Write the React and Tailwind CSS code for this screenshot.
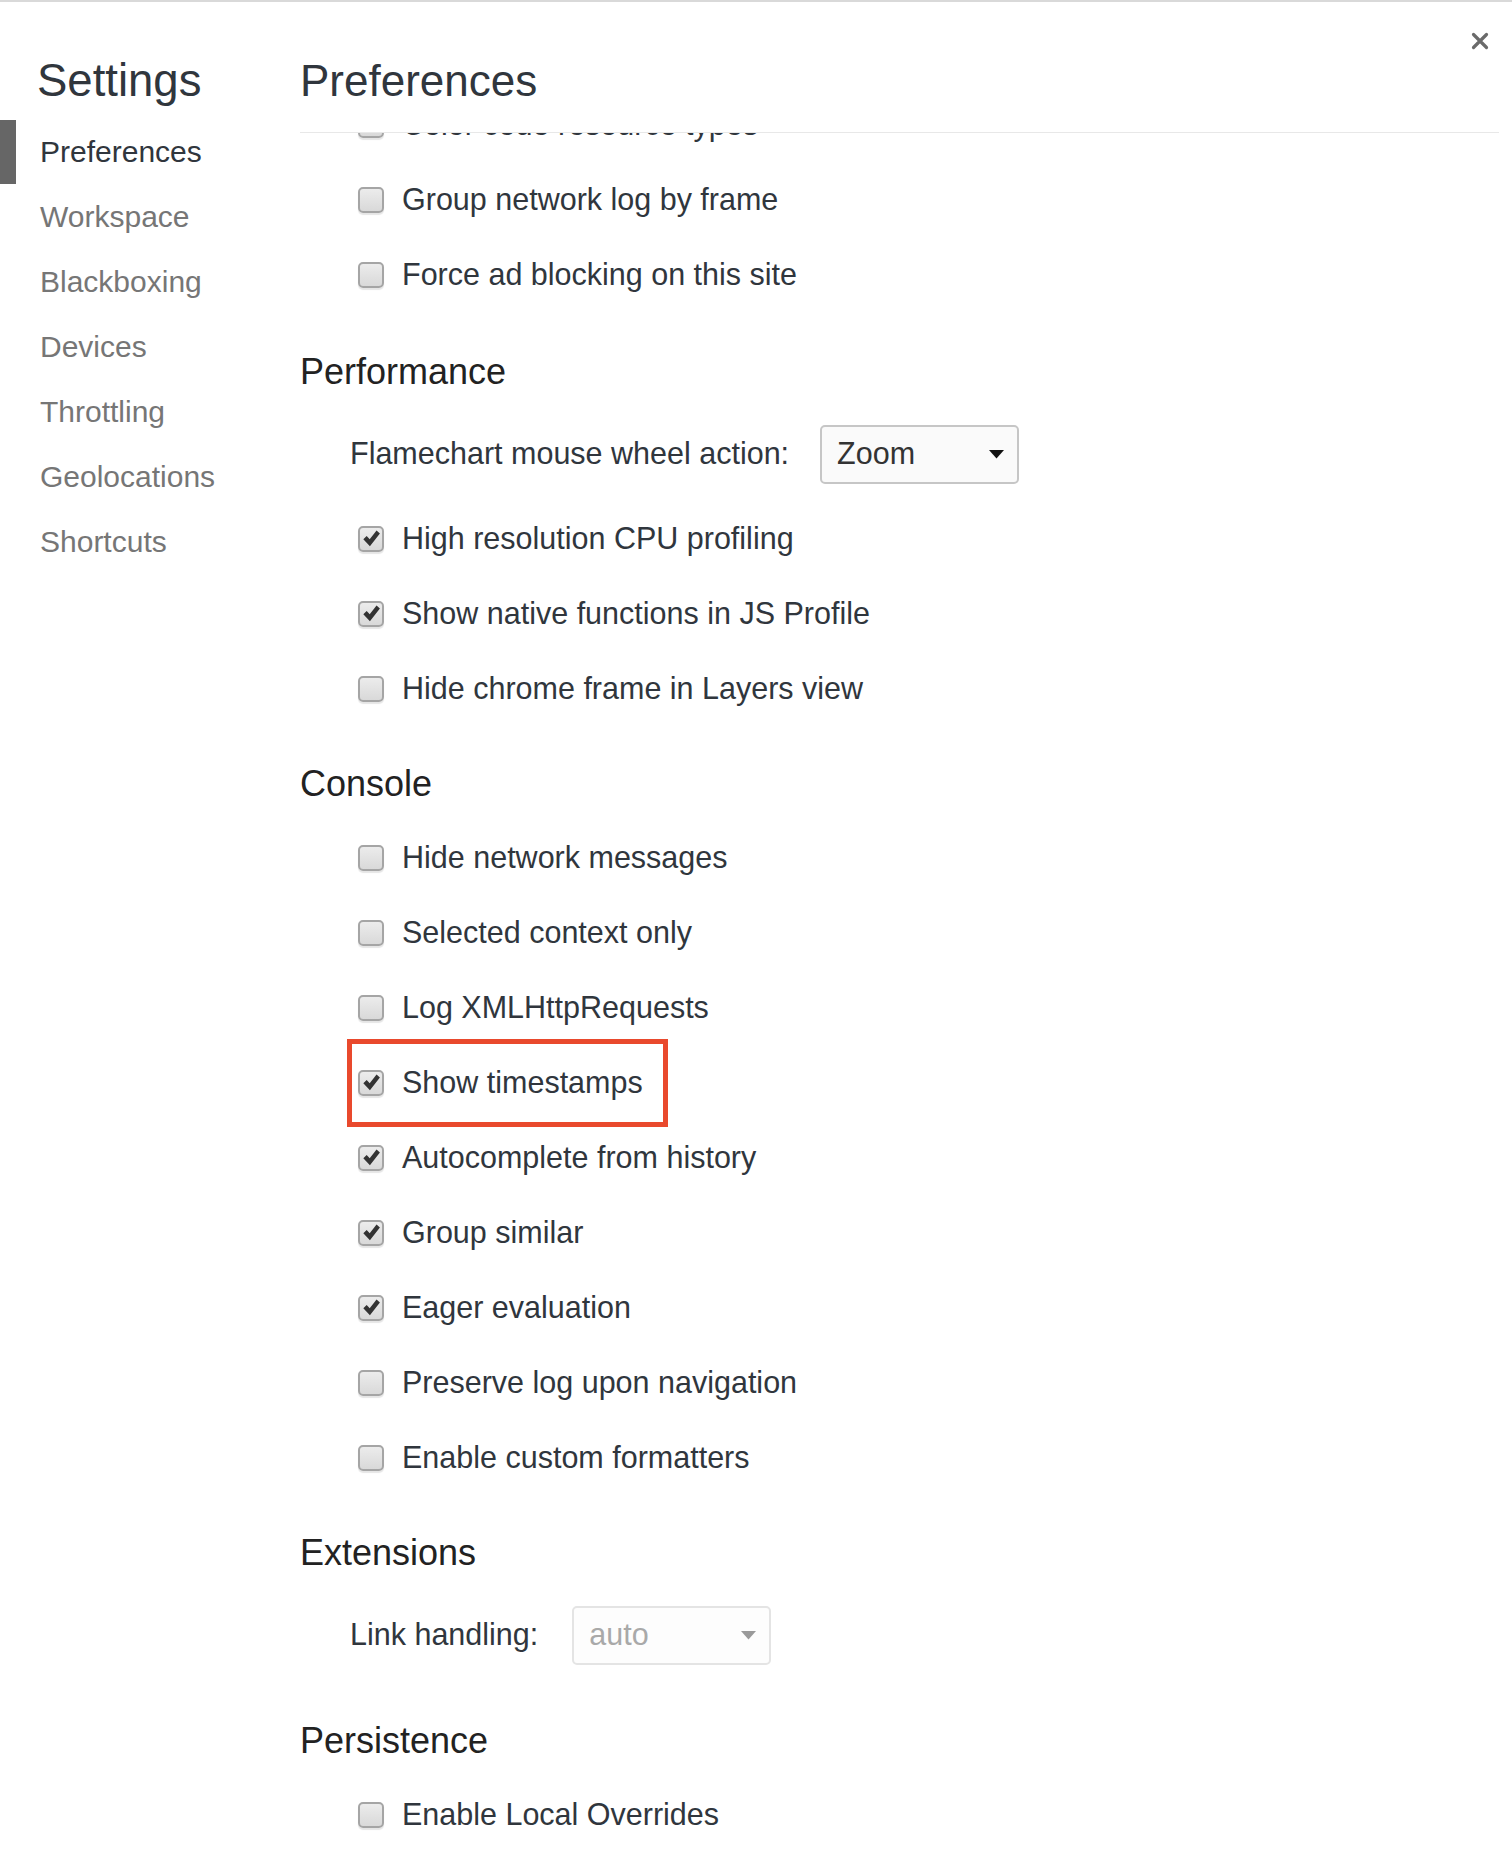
const navItems = ['Preferences', 'Workspace', 'Blackboxing', 'Devices', 'Throttling', 'Geolocations', 'Shortcuts'];

const CheckIcon = () => (
    <svg className="w-[21px] h-[21px]" viewBox="0 0 20 20">
        <path d="M2.2 10.6 L5.4 7.6 L8.3 10.7 L14.8 2.4 L18 5.2 L8.5 17.4 Z" fill="#333" />
    </svg>
);

const Checkbox = ({ label, checked, highlight }) => (
    <div className="relative ml-[58px] h-[75px] flex items-center">
        {highlight && (
            <div className="absolute -left-[11px] -top-[6px] w-[321px] h-[88px] border-[5px] border-[#e9492d]"></div>
        )}
        <div className="w-[26px] h-[26px] rounded-[5px] border-2 border-[#a5a5a5] bg-linear-to-b from-[#ececec] to-[#d9d9d9] shadow-[0_2px_1px_rgba(0,0,0,0.1)] flex items-center justify-center">
            {checked && <CheckIcon />}
        </div>
        <span className="ml-[18px] text-[30.5px] text-[#30363d] whitespace-nowrap">{label}</span>
    </div>
);

const SelectRow = ({ label, value, disabled, gap }) => (
    <div className="ml-[50px] mt-[13px] h-[94px] flex items-center">
        <span className={'text-[30.5px] text-[#30363d] whitespace-nowrap ' + gap}>{label}</span>
        <div
            className={
                disabled
                    ? 'w-[199px] h-[59px] rounded-[5px] border-2 border-[#e4e4e4] bg-[#fdfdfd] flex items-center justify-between pl-[15px] pr-[13px]'
                    : 'w-[199px] h-[59px] rounded-[5px] border-2 border-[#c6c6c6] bg-[#fafafa] flex items-center justify-between pl-[15px] pr-[13px]'
            }
        >
            <span className={disabled ? 'text-[30.5px] text-[#a9a9a9]' : 'text-[30.5px] text-[#333]'}>{value}</span>
            <svg className="w-[15px] h-[9px]" viewBox="0 0 15 9">
                <path d="M0 0 H15 L7.5 8.5 Z" fill={disabled ? '#9a9a9a' : '#111'} />
            </svg>
        </div>
    </div>
);

const SectionTitle = ({ children, className }) => (
    <h2 className={'text-[36px] leading-[44px] text-[#222] ' + className}>{children}</h2>
);

export default function App() {
    return (
        <div className="w-[1512px] h-[1862px] bg-white border-t-2 border-[#d9d9d9] flex relative overflow-hidden font-['Liberation_Sans',Arial,sans-serif]">
            {/* close button */}
            <button className="absolute left-[1471px] top-[30px] w-[18px] h-[18px]">
                <svg className="w-[18px] h-[18px]" viewBox="0 0 18 18">
                    <path d="M2.5 2.5 L15.5 15.5 M15.5 2.5 L2.5 15.5" stroke="#6a6a6a" strokeWidth="3.2" strokeLinecap="round" />
                </svg>
            </button>

            {/* Sidebar */}
            <aside className="w-[300px] shrink-0 pt-[54px]">
                <h1 className="pl-[37px] text-[45.5px] leading-[50px] text-[#30363d]">Settings</h1>
                <nav className="mt-[13px]">
                    {navItems.map((item, i) => (
                        <div key={item} className="relative h-[65px] flex items-center pl-[40px]">
                            {i === 0 && <div className="absolute left-0 top-[1px] w-[16px] h-[64px] bg-[#666]"></div>}
                            <span className={i === 0 ? 'text-[30px] text-[#30363d]' : 'text-[30px] text-[#767676]'}>{item}</span>
                        </div>
                    ))}
                </nav>
            </aside>

            {/* Main */}
            <main className="flex-1 min-w-0 flex flex-col pr-[13px]">
                <header className="pt-[54px] pb-[26px] border-b border-[#e8e8e8]">
                    <h1 className="text-[44px] leading-[50px] text-[#30363d]">Preferences</h1>
                </header>

                <div className="flex-1 overflow-hidden">
                    <div className="-mt-[46px]">
                        <Checkbox label="Color code resource types" />
                        <Checkbox label="Group network log by frame" />
                        <Checkbox label="Force ad blocking on this site" />

                        <SectionTitle className="mt-[38px]">Performance</SectionTitle>
                        <SelectRow label="Flamechart mouse wheel action:" value="Zoom" gap="mr-[31px]" />
                        <Checkbox label="High resolution CPU profiling" checked />
                        <Checkbox label="Show native functions in JS Profile" checked />
                        <Checkbox label="Hide chrome frame in Layers view" />

                        <SectionTitle className="mt-[36px] mb-[14px]">Console</SectionTitle>
                        <Checkbox label="Hide network messages" />
                        <Checkbox label="Selected context only" />
                        <Checkbox label="Log XMLHttpRequests" />
                        <Checkbox label="Show timestamps" checked highlight />
                        <Checkbox label="Autocomplete from history" checked />
                        <Checkbox label="Group similar" checked />
                        <Checkbox label="Eager evaluation" checked />
                        <Checkbox label="Preserve log upon navigation" />
                        <Checkbox label="Enable custom formatters" />

                        <SectionTitle className="mt-[36px]">Extensions</SectionTitle>
                        <SelectRow label="Link handling:" value="auto" disabled gap="mr-[34px]" />

                        <SectionTitle className="mt-[37px] mb-[14px]">Persistence</SectionTitle>
                        <Checkbox label="Enable Local Overrides" />
                    </div>
                </div>
            </main>
        </div>
    );
}
